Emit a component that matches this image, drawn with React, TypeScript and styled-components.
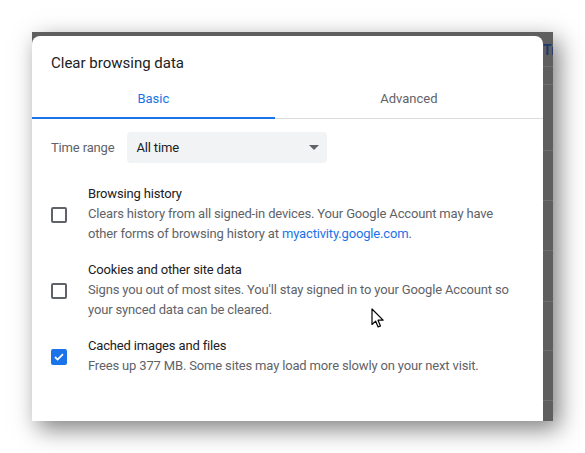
import React, { useState } from "react";
import styled, { createGlobalStyle } from "styled-components";

const GlobalStyle = createGlobalStyle`
  html, body {
    margin: 0;
    padding: 0;
    background: #fff;
    font-family: Roboto, "Liberation Sans", Arial, sans-serif;
  }
`;

const Stage = styled.div`
  padding: 32px 0 0 32px;
  height: 453px;
  box-sizing: border-box;
`;

const Window = styled.div`
  position: relative;
  width: 521px;
  height: 389px;
  display: flex;
  background: #5f5f5f;
  box-shadow: 6px 8px 22px rgba(0, 0, 0, 0.5);
`;

const Dialog = styled.div`
  width: 511px;
  margin-top: 4px;
  background: #fff;
  border-radius: 8px 8px 0 0;
  display: flex;
  flex-direction: column;
`;

const PageStrip = styled.div`
  flex: 1;
  display: flex;
  flex-direction: column;
  overflow: hidden;
`;

const StripRow = styled.div<{ $h: number }>`
  height: ${({ $h }) => $h}px;
  flex: none;
  border-bottom: 1px solid rgba(255, 255, 255, 0.1);
  display: flex;
  align-items: flex-end;
  white-space: nowrap;
`;

const StripText = styled.span`
  font-size: 14px;
  font-weight: 700;
  line-height: 14px;
  color: #1b3a6e;
  margin-bottom: 9px;
`;

const Title = styled.h2`
  margin: 0;
  padding: 17px 19px 0;
  font-size: 15px;
  font-weight: 400;
  line-height: 20px;
  color: #202124;
`;

const Tabs = styled.div`
  display: flex;
  border-bottom: 1px solid #dadce0;
`;

const Tab = styled.button<{ $active?: boolean }>`
  flex: 1 1 auto;
  padding: 16px 0 8px;
  margin: 0 0 -1px;
  border: none;
  border-bottom: 2px solid ${({ $active }) => ($active ? "#1a73e8" : "transparent")};
  background: none;
  font-family: inherit;
  font-size: 13px;
  line-height: 20px;
  color: ${({ $active }) => ($active ? "#1a73e8" : "#5f6368")};
  cursor: pointer;
`;

const Body = styled.div`
  padding: 13px 23px 0 19px;
  display: flex;
  flex-direction: column;
  gap: 21px;
  letter-spacing: -0.16px;
`;

const RangeRow = styled.div`
  display: flex;
  align-items: center;
  gap: 13px;
`;

const RangeLabel = styled.span`
  font-size: 13px;
  color: #5f6368;
`;

const Select = styled.div`
  width: 200px;
  height: 31px;
  box-sizing: border-box;
  padding: 0 8px 0 9px;
  display: flex;
  align-items: center;
  justify-content: space-between;
  background: #f1f3f4;
  border-radius: 4px;
  font-size: 13px;
  color: #202124;
`;

const Caret = styled.span`
  width: 0;
  height: 0;
  border-left: 5px solid transparent;
  border-right: 5px solid transparent;
  border-top: 5px solid #5f6368;
`;

const Options = styled.div`
  display: flex;
  flex-direction: column;
  gap: 16px;
`;

const OptionRow = styled.label`
  display: flex;
  align-items: center;
  gap: 21px;
  cursor: pointer;
`;

const Box = styled.span<{ $checked?: boolean }>`
  flex: none;
  width: 16px;
  height: 16px;
  box-sizing: border-box;
  border-radius: 2px;
  border: 2px solid ${({ $checked }) => ($checked ? "#1a73e8" : "#5f6368")};
  background: ${({ $checked }) => ($checked ? "#1a73e8" : "#fff")};
  display: flex;
  align-items: center;
  justify-content: center;
  margin-top: 1px;
`;

const OptionText = styled.div`
  flex: 1;
  font-size: 13px;
  line-height: 20px;
`;

const OptionTitle = styled.div`
  color: #202124;
`;

const OptionDesc = styled.div`
  color: #5f6368;
`;

const Link = styled.a`
  color: #1a73e8;
  text-decoration: none;
`;

const Pointer = styled.svg`
  position: absolute;
  left: 339px;
  top: 276px;
`;

const stripRows = [34, 17, 65, 49, 49, 50, 48, 49];

type Item = { title: string; desc: React.ReactNode; checked: boolean };

export default function App() {
  const [tab, setTab] = useState("basic");
  const [items, setItems] = useState<Item[]>([
    {
      title: "Browsing history",
      desc: (
        <>
          Clears history from all signed-in devices. Your Google Account may have other forms of
          browsing history at <Link href="#">myactivity.google.com</Link>.
        </>
      ),
      checked: false,
    },
    {
      title: "Cookies and other site data",
      desc: "Signs you out of most sites. You'll stay signed in to your Google Account so your synced data can be cleared.",
      checked: false,
    },
    {
      title: "Cached images and files",
      desc: "Frees up 377 MB. Some sites may load more slowly on your next visit.",
      checked: true,
    },
  ]);

  return (
    <>
      <GlobalStyle />
      <Stage>
        <Window>
          <Dialog>
            <Title>Clear browsing data</Title>
            <Tabs>
              <Tab $active={tab === "basic"} onClick={() => setTab("basic")}>
                Basic
              </Tab>
              <Tab $active={tab === "advanced"} onClick={() => setTab("advanced")}>
                Advanced
              </Tab>
            </Tabs>
            <Body>
              <RangeRow>
                <RangeLabel>Time range</RangeLabel>
                <Select>
                  <span>All time</span>
                  <Caret />
                </Select>
              </RangeRow>
              <Options>
                {items.map((item, i) => (
                  <OptionRow
                    key={item.title}
                    onClick={() =>
                      setItems((prev) =>
                        prev.map((p, j) => (j === i ? { ...p, checked: !p.checked } : p))
                      )
                    }
                  >
                    <Box $checked={item.checked}>
                      {item.checked && (
                        <svg width="10" height="8" viewBox="0 0 10 8">
                          <path d="M1 4l2.6 2.6L9 1.2" fill="none" stroke="#fff" strokeWidth="1.8" />
                        </svg>
                      )}
                    </Box>
                    <OptionText>
                      <OptionTitle>{item.title}</OptionTitle>
                      <OptionDesc>{item.desc}</OptionDesc>
                    </OptionText>
                  </OptionRow>
                ))}
              </Options>
            </Body>
          </Dialog>
          <PageStrip>
            {stripRows.map((h, i) => (
              <StripRow key={i} $h={h}>
                {i === 0 && <StripText>Tr</StripText>}
              </StripRow>
            ))}
          </PageStrip>
          <Pointer width="13" height="20" viewBox="0 0 13 20">
            <path
              d="M1 1v15.5l3.6-3.4 2.5 5.8 2.4-1-2.5-5.7h5.1z"
              fill="#fff"
              stroke="#000"
              strokeWidth="1.2"
              strokeLinejoin="round"
            />
          </Pointer>
        </Window>
      </Stage>
    </>
  );
}
